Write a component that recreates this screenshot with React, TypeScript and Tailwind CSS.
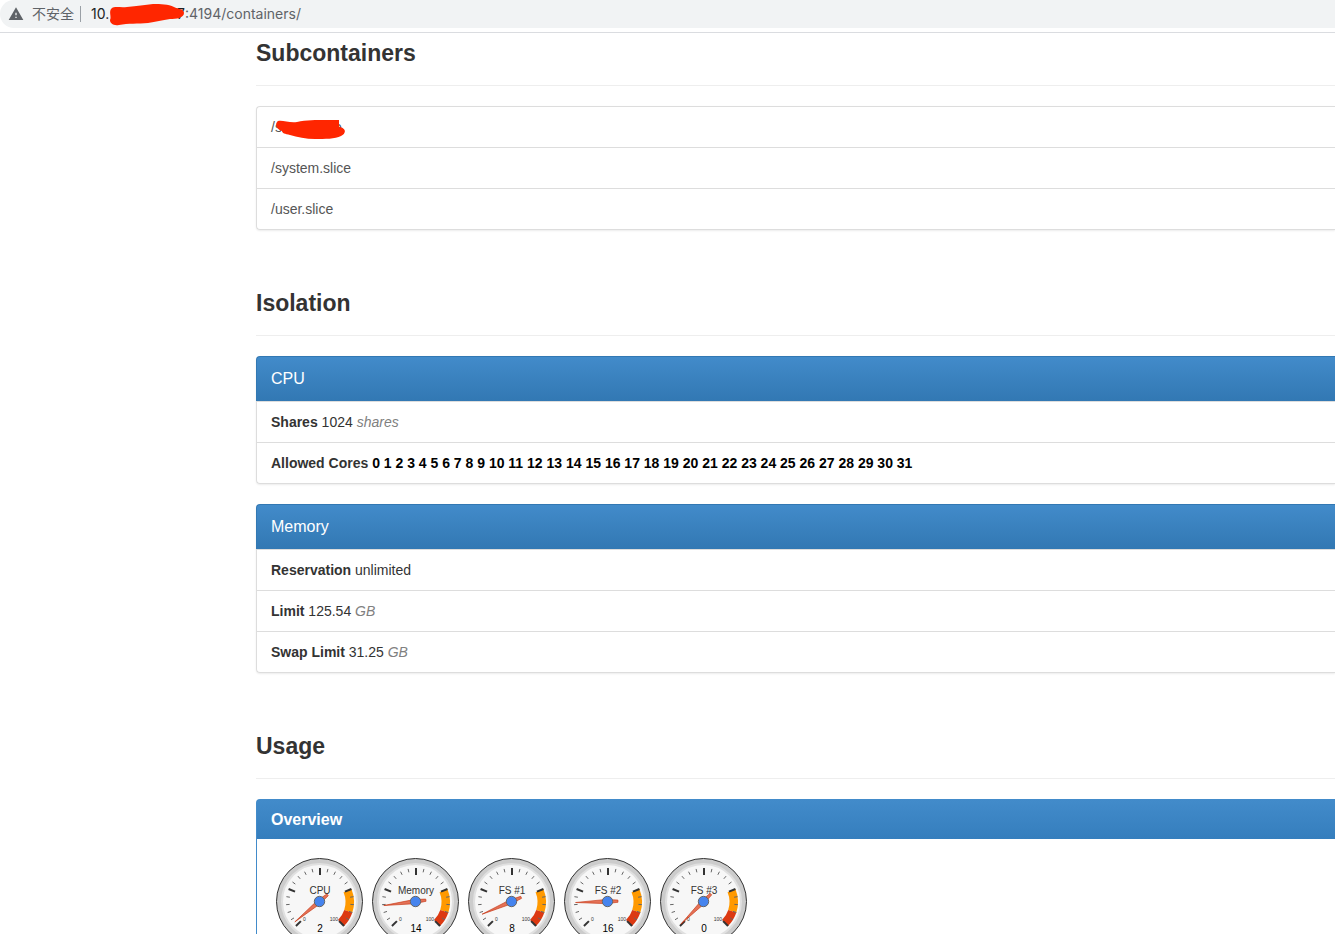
import React from "react";
import { MdWarning } from "react-icons/md";

const CENTER = 47.5;
const DIAL = 48;

function point(percent: number, radius: number) {
  const angle = ((-135 + percent * 2.7) * Math.PI) / 180;
  return {
    x: DIAL + radius * Math.sin(angle),
    y: DIAL - radius * Math.cos(angle),
  };
}

function band(from: number, to: number, inner: number, outer: number) {
  const a = point(from, outer);
  const b = point(to, outer);
  const c = point(to, inner);
  const d = point(from, inner);
  return `M${a.x} ${a.y}A${outer} ${outer} 0 0 1 ${b.x} ${b.y}L${c.x} ${c.y}A${inner} ${inner} 0 0 0 ${d.x} ${d.y}Z`;
}

function Gauge({ label, value }: { label: string; value: number }) {
  const ticks = Array.from({ length: 21 }, (_, i) => i);
  return (
    <svg width="96" height="96" viewBox="0 0 96 96" role="img" aria-label={`${label} ${value}`} className="block shrink-0 font-['Liberation_Sans',Arial,sans-serif]">
      <circle cx={CENTER} cy={CENTER} r="43" fill="#cccccc" stroke="#333333" strokeWidth="1" />
      <circle cx={CENTER} cy={CENTER} r="37.5" fill="#f7f7f7" stroke="#e0e0e0" strokeWidth="2" />
      <path d={band(75, 90, 25.5, 34)} fill="#ff9900" />
      <path d={band(90, 100, 25.5, 34)} fill="#dc3912" />
      {ticks.map((i) => {
        const major = i % 5 === 0;
        const start = point(i * 5, major ? 27 : 30.5);
        const end = point(i * 5, 34);
        return (
          <line
            key={i}
            x1={start.x}
            y1={start.y}
            x2={end.x}
            y2={end.y}
            stroke={major ? "#333333" : "#666666"}
            strokeWidth={major ? 2 : 1}
          />
        );
      })}
      <text x="48" y="40" textAnchor="middle" fontSize="10" fill="#333333">{label}</text>
      <text x="31" y="67" fontSize="5" fill="#333333">0</text>
      <text x="66" y="67" textAnchor="end" fontSize="5" fill="#333333">100</text>
      <text x="48" y="78" textAnchor="middle" fontSize="10" fill="#000000">{value}</text>
      <g transform={`rotate(${-135 + value * 2.7} ${CENTER} ${CENTER})`}>
        <path d="M47.5 15.5L49.6 46L48.6 58H46.4L45.4 46Z" fill="#dc3912" fillOpacity="0.7" stroke="#c63310" strokeWidth="0.6" />
      </g>
      <circle cx={CENTER} cy={CENTER} r="5.2" fill="#4684ee" stroke="#666666" strokeWidth="1" />
    </svg>
  );
}

function SectionTitle({ children }: { children: React.ReactNode }) {
  return (
    <h2 className="mb-5 border-b border-[#eeeeee] pb-[19px] text-[23px] leading-[26px] font-bold">
      {children}
    </h2>
  );
}

const card = "rounded-l border border-r-0 border-[#dddddd] shadow-[0_1px_2px_rgba(0,0,0,0.08)]";
const row = "block h-[41px] border-b border-[#dddddd] px-3.5 leading-10 last:h-10 last:border-b-0";

function Unit({ children }: { children: React.ReactNode }) {
  return <em className="text-[#808080]">{children}</em>;
}

function IsolationCard({ title, children }: { title: string; children: React.ReactNode }) {
  return (
    <section className="rounded-l shadow-[0_1px_2px_rgba(0,0,0,0.08)]">
      <h3 className="h-[45px] rounded-tl border-t border-l border-[#3278b3] bg-linear-to-b from-[#428bca] to-[#3278b3] px-3.5 text-base leading-[43px] text-white">
        {title}
      </h3>
      <ul className="rounded-bl border border-r-0 border-[#dddddd]">{children}</ul>
    </section>
  );
}

function AddressBar() {
  return (
    <header className="shrink-0 border-b border-[#dadce0] pb-1">
      <div className="flex h-7 items-center rounded-l-full bg-[#f1f3f4] pl-2 font-[Inter,'Noto_Sans_CJK_SC',sans-serif] text-sm text-[#5f6368]">
        <MdWarning size={16} aria-hidden="true" />
        <span className="ml-2">不安全</span>
        <span className="mr-2.5 ml-1.5 h-4 w-px bg-[#9aa0a6]" />
        <span className="relative flex">
          <span className="flex w-[94px] justify-between text-[#202124]">
            <span>10.</span>
            <span>7</span>
          </span>
          <span>:4194/containers/</span>
          <svg className="absolute top-0 left-4" width="78" height="24" viewBox="0 0 78 24" aria-hidden="true">
            <path d="M5 4C8 2 14 4 20 3C30 2 38 1 46 0C54 0 61 0 67 3C71 5 77 5 77 9C77 14 69 15 63 15C55 16 49 18 41 19C31 20 21 19 12 21C6 22 3 19 3 16C5 13 1 7 5 4Z" fill="#ff2600" />
          </svg>
        </span>
      </div>
    </header>
  );
}

const gauges = [
  { label: "CPU", value: 2 },
  { label: "Memory", value: 14 },
  { label: "FS #1", value: 8 },
  { label: "FS #2", value: 16 },
  { label: "FS #3", value: 0 },
];

export default function App() {
  const cores = Array.from({ length: 32 }, (_, i) => i).join(" ");
  return (
    <div className="flex h-screen flex-col overflow-hidden bg-white font-['Liberation_Sans',Arial,sans-serif] text-sm text-[#333333]">
      <AddressBar />
      <main className="ml-64 flex flex-col gap-15 pt-[7px]">
        <section>
          <SectionTitle>Subcontainers</SectionTitle>
          <nav className={`${card} text-[#555555]`}>
            <a href="#hidden" className={row}>
              <span className="relative inline-flex">
                <span>/s</span>
                <span className="ml-[52px]">e</span>
                <svg className="absolute top-3 left-1" width="72" height="22" viewBox="0 0 72 22" aria-hidden="true">
                  <path d="M3 2C8 1 14 4 22 3C31 1 42 1 50 1H64V8C72 9 71 15 66 17C60 20 50 20 40 20C31 20 22 18 15 16C10 15 7 14 7 12C2 11-1 5 3 2Z" fill="#ff2600" />
                </svg>
              </span>
            </a>
            <a href="#system" className={row}>/system.slice</a>
            <a href="#user" className={row}>/user.slice</a>
          </nav>
        </section>

        <section>
          <SectionTitle>Isolation</SectionTitle>
          <div className="flex flex-col gap-5">
            <IsolationCard title="CPU">
              <li className={row}><strong>Shares</strong> 1024 <Unit>shares</Unit></li>
              <li className={row}><strong>Allowed Cores <span className="text-black">{cores}</span></strong></li>
            </IsolationCard>
            <IsolationCard title="Memory">
              <li className={row}><strong>Reservation</strong> unlimited</li>
              <li className={row}><strong>Limit</strong> 125.54 <Unit>GB</Unit></li>
              <li className={row}><strong>Swap Limit</strong> 31.25 <Unit>GB</Unit></li>
            </IsolationCard>
          </div>
        </section>

        <section>
          <SectionTitle>Usage</SectionTitle>
          <div className="rounded-l border border-r-0 border-[#428bca]">
            <h3 className="h-[39px] bg-linear-to-b from-[#428bca] to-[#357ebd] px-3.5 text-base leading-[39px] font-bold text-white">
              Overview
            </h3>
            <div className="flex p-[15px]">
              {gauges.map((gauge) => (
                <Gauge key={gauge.label} label={gauge.label} value={gauge.value} />
              ))}
            </div>
          </div>
        </section>
      </main>
    </div>
  );
}
